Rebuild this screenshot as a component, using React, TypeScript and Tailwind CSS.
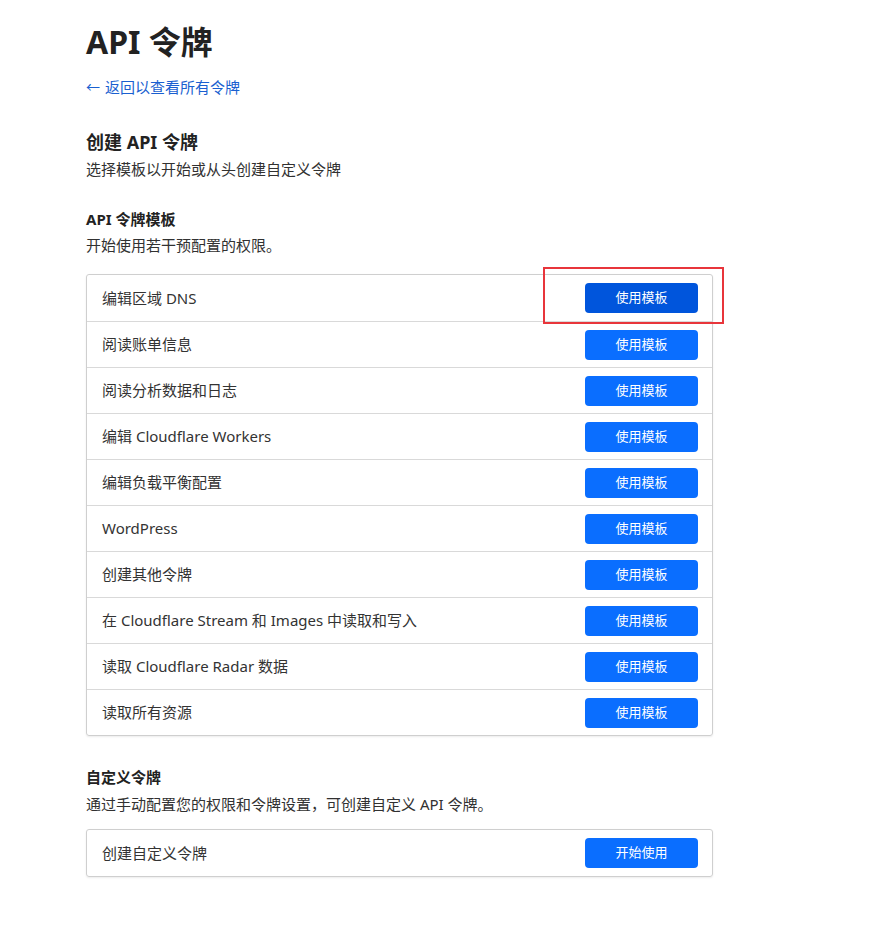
import React from "react";

const templates = [
  "编辑区域 DNS",
  "阅读账单信息",
  "阅读分析数据和日志",
  "编辑 Cloudflare Workers",
  "编辑负载平衡配置",
  "WordPress",
  "创建其他令牌",
  "在 Cloudflare Stream 和 Images 中读取和写入",
  "读取 Cloudflare Radar 数据",
  "读取所有资源",
];

const Row = ({
  label,
  action,
  first,
  active,
}: {
  label: string;
  action: string;
  first?: boolean;
  active?: boolean;
}) => (
  <div
    className={`flex h-[46px] items-center justify-between pl-[15px] pr-[14px] ${
      first ? "" : "border-t border-[#d9d9d9]"
    }`}
  >
    <span className="text-[15px] text-[#333]">{label}</span>
    <div className="relative">
      <button
        className={`h-[30px] w-[113px] rounded-[4px] text-[13px] text-white ${
          active ? "bg-[#0055dc]" : "bg-[#0a6eff]"
        }`}
      >
        {action}
      </button>
      {active && (
        <div className="pointer-events-none absolute -left-[42px] -right-[26px] -top-[16px] -bottom-[11px] border-2 border-[#e8353b]" />
      )}
    </div>
  </div>
);

export default function App() {
  return (
    <div
      className="min-h-screen bg-white pl-[86px] pt-[22px] text-[#313131]"
      style={{ fontFamily: '"Noto Sans", "Noto Sans CJK SC", sans-serif' }}
    >
      <h1 className="text-[32px] font-bold leading-[40px] text-[#222]">API 令牌</h1>
      <a className="mt-[14px] flex items-center gap-[5px] text-[15px] leading-[22px] text-[#1a5fd0]">
        <span className="text-[14px]">←</span>
        <span>返回以查看所有令牌</span>
      </a>

      <h2 className="mt-[31px] text-[18px] font-bold leading-[26px] text-[#222]">创建 API 令牌</h2>
      <p className="mt-[3px] text-[15px] leading-[22px]">选择模板以开始或从头创建自定义令牌</p>

      <h3 className="mt-[28px] text-[15px] font-bold leading-[22px] text-[#222]">API 令牌模板</h3>
      <p className="mt-[4px] text-[15px] leading-[22px]">开始使用若干预配置的权限。</p>

      <div className="mt-[18px] w-[627px] rounded-[3px] border border-[#cfcfcf] shadow-[0_1px_2px_rgba(0,0,0,0.08)]">
        {templates.map((t, i) => (
          <Row key={t} label={t} action="使用模板" first={i === 0} active={i === 0} />
        ))}
      </div>

      <h3 className="mt-[30px] text-[15px] font-bold leading-[22px] text-[#222]">自定义令牌</h3>
      <p className="mt-[5px] text-[15px] leading-[22px]">通过手动配置您的权限和令牌设置，可创建自定义 API 令牌。</p>

      <div className="mt-[14px] w-[627px] rounded-[3px] border border-[#cfcfcf] shadow-[0_1px_2px_rgba(0,0,0,0.08)]">
        <Row label="创建自定义令牌" action="开始使用" first />
      </div>
    </div>
  );
}
